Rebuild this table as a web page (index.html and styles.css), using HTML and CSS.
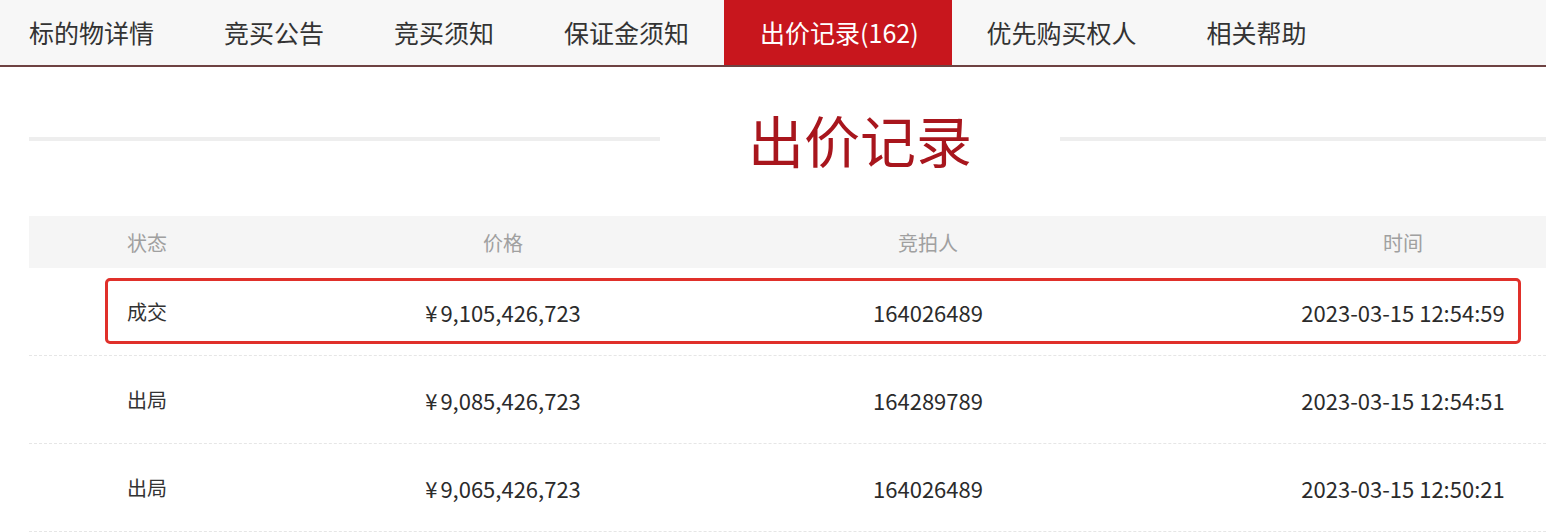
FILE: index.html
```html
<!DOCTYPE html>
<html lang="zh-CN">
<head>
<meta charset="utf-8">
<title>出价记录</title>
<link rel="stylesheet" href="styles.css">
</head>
<body>
<div class="page">
  <nav class="tabs">
    <a class="tab">标的物详情</a>
    <a class="tab">竞买公告</a>
    <a class="tab">竞买须知</a>
    <a class="tab">保证金须知</a>
    <a class="tab active">出价记录(162)</a>
    <a class="tab">优先购买权人</a>
    <a class="tab">相关帮助</a>
  </nav>
  <main class="main">
    <div class="title-row">
      <span class="title-line"></span>
      <h1 class="title">出价记录</h1>
      <span class="title-line"></span>
    </div>
    <div class="table">
      <div class="thead">
        <span class="cell">状态</span>
        <span class="cell">价格</span>
        <span class="cell">竞拍人</span>
        <span class="cell">时间</span>
      </div>
      <div class="row highlighted">
        <span class="cell">成交</span>
        <span class="cell num"><span class="yen">¥</span>9,105,426,723</span>
        <span class="cell num">164026489</span>
        <span class="cell num">2023-03-15 12:54:59</span>
        <span class="mark"></span>
      </div>
      <div class="row">
        <span class="cell">出局</span>
        <span class="cell num"><span class="yen">¥</span>9,085,426,723</span>
        <span class="cell num">164289789</span>
        <span class="cell num">2023-03-15 12:54:51</span>
      </div>
      <div class="row">
        <span class="cell">出局</span>
        <span class="cell num"><span class="yen">¥</span>9,065,426,723</span>
        <span class="cell num">164026489</span>
        <span class="cell num">2023-03-15 12:50:21</span>
      </div>
    </div>
  </main>
</div>
</body>
</html>
```
FILE: styles.css
```css
* { box-sizing: border-box; }
html, body {
  margin: 0;
  padding: 0;
  background: #fff;
  overflow: hidden;
}
body {
  font-family: "Noto Sans CJK SC", "Noto Sans", sans-serif;
  color: #333;
}
.page {
  width: 1546px;
  height: 532px;
  overflow: hidden;
}
.tabs {
  display: flex;
  height: 67px;
  background: #f7f7f7;
  border-bottom: 2px solid #6e4242;
}
.tab {
  display: block;
  padding: 0 35px;
  font-size: 25px;
  line-height: 65px;
  color: #333;
  white-space: nowrap;
}
.tab:first-child { padding-left: 29px; }
.tab.active {
  background: #c8161d;
  color: #fff;
  padding: 0 33px 0 36px;
}
.main {
  width: 1691px;
  padding-left: 29px;
}
.title-row {
  display: flex;
  align-items: center;
  margin-top: 44px;
  height: 56px;
}
.title-line {
  flex: 1;
  height: 4px;
  background: #eeeeee;
}
.title {
  width: 400px;
  margin: 0;
  text-align: center;
  font-size: 56px;
  font-weight: 400;
  line-height: 56px;
  color: #a8161d;
}
.table {
  margin-top: 49px;
}
.thead, .row {
  display: grid;
  grid-template-columns: 236px 476px 374px 576px;
  align-items: center;
}
.thead {
  height: 52px;
  background: #f5f5f5;
  color: #a0a0a0;
  font-size: 20px;
}
.row {
  position: relative;
  height: 88px;
  border-bottom: 1px dashed #e6e6e6;
  font-size: 20px;
  color: #333;
}
.cell {
  text-align: center;
  white-space: nowrap;
}
.cell.num {
  font-size: 22px;
  color: #2b2b2b;
}
.yen {
  margin-right: 3px;
}
.mark {
  position: absolute;
  left: 76px;
  top: 10px;
  width: 1416px;
  height: 66px;
  border: 3px solid #e0302a;
  border-radius: 5px;
}
```
